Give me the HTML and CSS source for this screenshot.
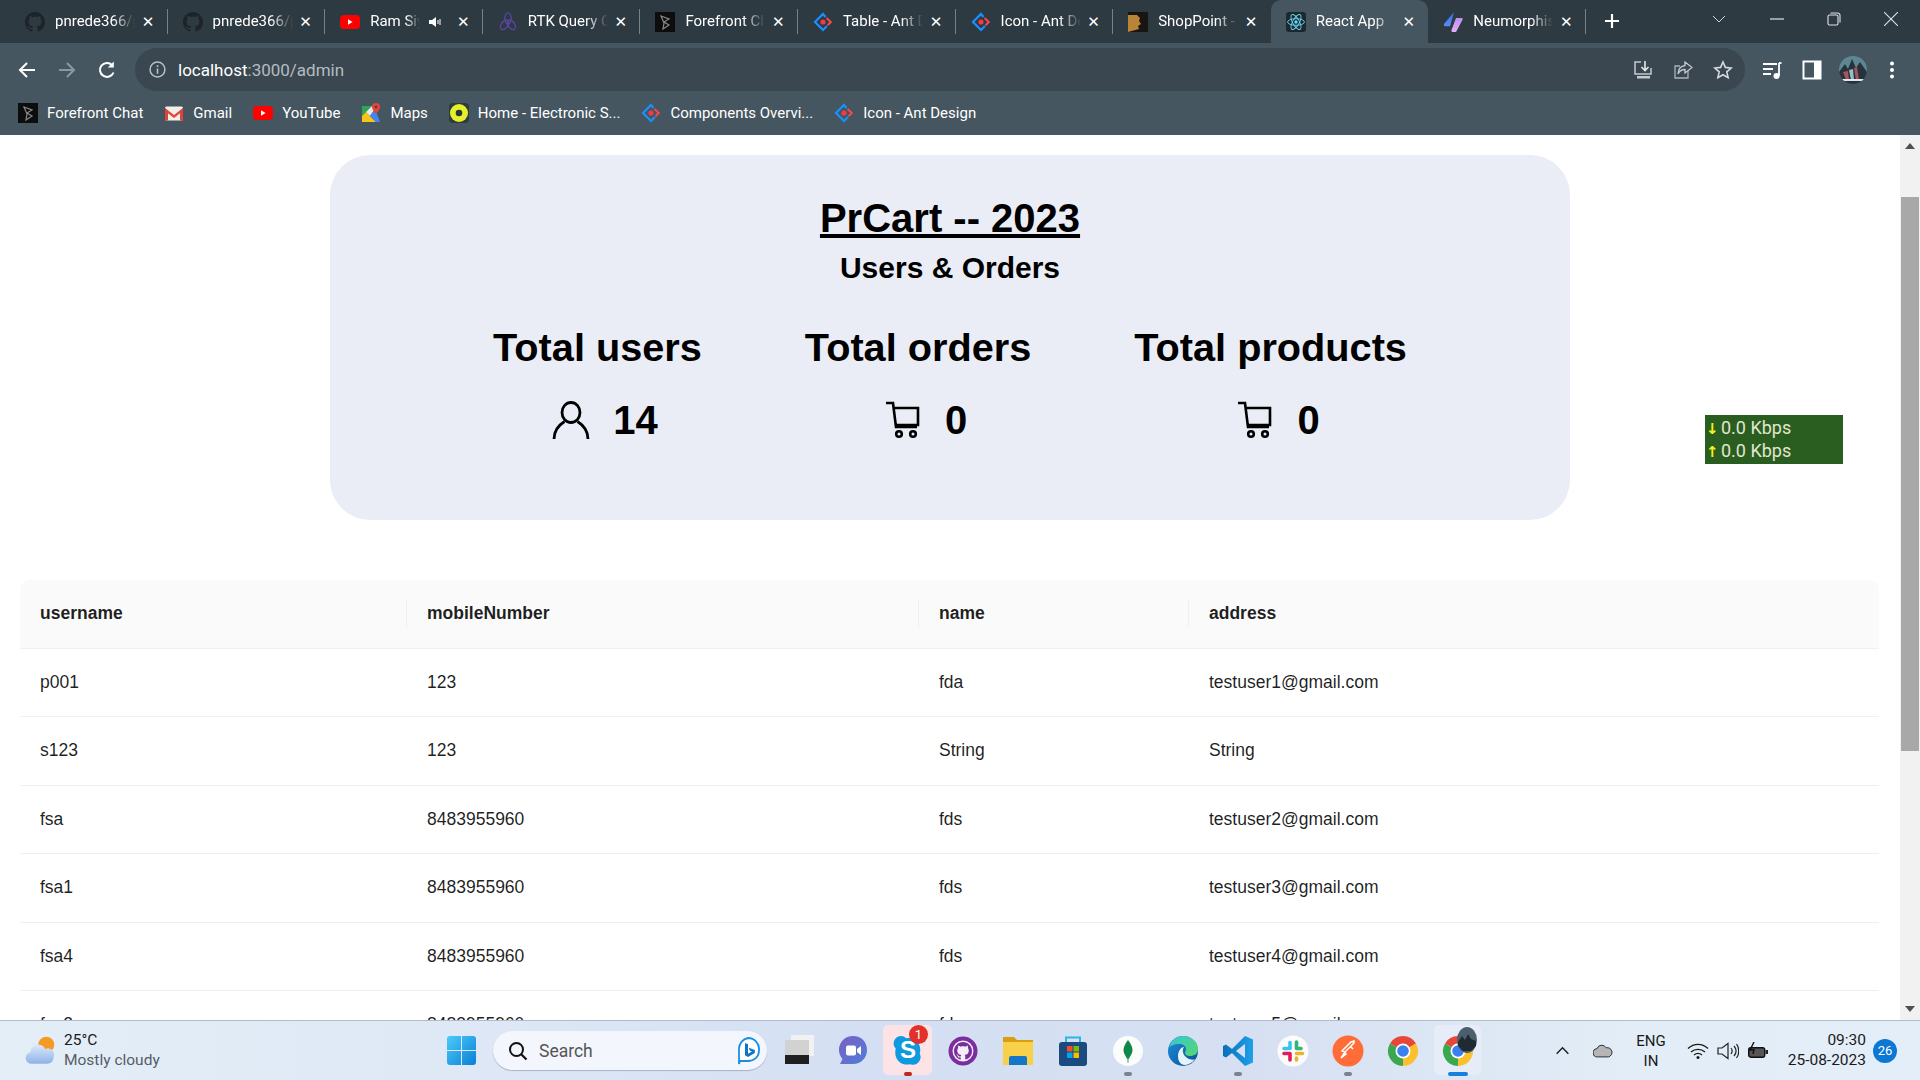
FILE: index.html
```html
<!DOCTYPE html>
<html lang="en">
<head>
<meta charset="utf-8">
<title>React App</title>
<link rel="stylesheet" href="styles.css">
</head>
<body>
<svg class="defs" aria-hidden="true">
  <defs>
    <linearGradient id="gEdge" x1="0" y1="0" x2="1" y2="1"><stop offset="0" stop-color="#36c8d8"/><stop offset="1" stop-color="#58d66a"/></linearGradient>
    <linearGradient id="gEdge2" x1="0" y1="0" x2="1" y2="1"><stop offset="0" stop-color="#1b8fd8"/><stop offset="1" stop-color="#0b4f9a"/></linearGradient>
    <linearGradient id="gCode" x1="0" y1="0" x2="1" y2="0"><stop offset="0" stop-color="#0a6fb8"/><stop offset="1" stop-color="#1fa0ea"/></linearGradient>
    <linearGradient id="gMeet" x1="0" y1="0" x2="1" y2="1"><stop offset="0" stop-color="#7b5fc4"/><stop offset="1" stop-color="#4f7ed8"/></linearGradient>
    <linearGradient id="gWin" x1="0" y1="0" x2="1" y2="1"><stop offset="0" stop-color="#4bcbf9"/><stop offset="1" stop-color="#0a7fd6"/></linearGradient>
    <linearGradient id="gNeu" x1="0" y1="0" x2="0" y2="1"><stop offset="0" stop-color="#3c6cf0"/><stop offset="1" stop-color="#5a8cf8"/></linearGradient>
    <linearGradient id="gNeu2" x1="0" y1="0" x2="0" y2="1"><stop offset="0" stop-color="#c08cf6"/><stop offset="1" stop-color="#e4b0f8"/></linearGradient>
    <linearGradient id="gCloud" x1="0" y1="0" x2="0" y2="1"><stop offset="0" stop-color="#dbe8fb"/><stop offset="1" stop-color="#8fb2e6"/></linearGradient>
    <symbol id="i-gh" viewBox="0 0 16 16"><path fill="currentColor" d="M8 0C3.58 0 0 3.58 0 8c0 3.54 2.29 6.53 5.47 7.59.4.07.55-.17.55-.38 0-.19-.01-.82-.01-1.49-2.01.37-2.53-.49-2.69-.94-.09-.23-.48-.94-.82-1.13-.28-.15-.68-.52-.01-.53.63-.01 1.08.58 1.23.82.72 1.21 1.87.87 2.33.66.07-.52.28-.87.51-1.07-1.78-.2-3.64-.89-3.64-3.95 0-.87.31-1.59.82-2.15-.08-.2-.36-1.02.08-2.12 0 0 .67-.21 2.2.82.64-.18 1.32-.27 2-.27.68 0 1.36.09 2 .27 1.53-1.04 2.2-.82 2.2-.82.44 1.1.16 1.92.08 2.12.51.56.82 1.27.82 2.15 0 3.07-1.87 3.75-3.65 3.95.29.25.54.73.54 1.48 0 1.07-.01 1.93-.01 2.2 0 .21.15.46.55.38A8.013 8.013 0 0016 8c0-4.42-3.58-8-8-8z"/></symbol>
    <symbol id="i-yt" viewBox="0 0 20 20"><rect y="3" width="20" height="14" rx="4" fill="#f00"/><path d="M8 7.200v5.600l4.600-2.800z" fill="#fff"/></symbol>
    <symbol id="i-rtk" viewBox="0 0 20 20"><g fill="none" stroke="#5b45a8" stroke-width="1.300"><ellipse cx="10" cy="6.500" rx="3.200" ry="5.600"/><ellipse cx="6.600" cy="12.800" rx="5.400" ry="3.200" transform="rotate(-55 6.600 12.800)"/><ellipse cx="13.400" cy="12.800" rx="5.400" ry="3.200" transform="rotate(55 13.400 12.800)"/></g></symbol>
    <symbol id="i-ff" viewBox="0 0 20 20"><rect width="20" height="20" fill="#0d0d0d"/><path d="M6 4l8 3-5 3 5 3-6 4 1-6z" fill="none" stroke="#8a8a8a" stroke-width="1.200"/></symbol>
    <symbol id="i-ant" viewBox="0 0 20 20"><path d="M12.500 5L10 2 2 10l8 8 4-4" fill="none" stroke="#1890ff" stroke-width="2.200"/><path d="M13.500 6l4.300 4-3.300 3.300" fill="none" stroke="#f5484f" stroke-width="2"/><circle cx="10" cy="10" r="2.600" fill="#f5384a"/></symbol>
    <symbol id="i-shop" viewBox="0 0 20 20"><rect width="20" height="20" fill="#191512"/><path d="M0 3h9l3 3-1 3 2 3-3 2 1 3-11 3z" fill="#b98436"/></symbol>
    <symbol id="i-react" viewBox="0 0 20 20"><rect width="20" height="20" rx="3" fill="#20272c"/><g fill="none" stroke="#61dafb" stroke-width=".9"><ellipse cx="10" cy="10" rx="8.400" ry="3.300"/><ellipse cx="10" cy="10" rx="8.400" ry="3.300" transform="rotate(60 10 10)"/><ellipse cx="10" cy="10" rx="8.400" ry="3.300" transform="rotate(120 10 10)"/></g><circle cx="10" cy="10" r="1.700" fill="#61dafb"/></symbol>
    <symbol id="i-neu" viewBox="0 0 20 20"><path d="M11 0L1 12c-.6 1 .2 2.200 1.200 2.200H7z" fill="url(#gNeu)"/><path d="M13 6h5.500c1 0 1.500 1 1 1.800L13 20c-3 1.500-5 0-4.500-2z" fill="url(#gNeu2)"/></symbol>
    <symbol id="i-gmail" viewBox="0 0 20 20"><rect x="1" y="3.500" width="18" height="14" rx="1.500" fill="#f3efe9"/><path d="M1 5l9 7 9-7v3l-9 7-9-7z" fill="#e04a3c"/><path d="M1 5v12.500h3V8zM19 5v12.500h-3V8z" fill="#d8453a"/></symbol>
    <symbol id="i-maps" viewBox="0 0 20 20"><path d="M1 3h10l-10 10z" fill="#2fa650"/><path d="M1 13l4-4 10 10H1z" fill="#f7c518"/><path d="M5 9l6-6 3 3-5 7z" fill="#e9e9e9"/><path d="M9 13l5-7 5 13h-4z" fill="#4285f4"/><path d="M15 0a4 4 0 014 4c0 3-4 7-4 7s-4-4-4-7a4 4 0 014-4z" fill="#e2473a"/><circle cx="15" cy="4" r="1.400" fill="#8c2a22"/></symbol>
    <symbol id="i-home" viewBox="0 0 20 20"><rect width="20" height="20" rx="4" fill="#2d3a42"/><circle cx="10" cy="10" r="9" fill="#e4f02a"/><circle cx="10" cy="10" r="3.300" fill="#29343a"/></symbol>
    <symbol id="i-chrome" viewBox="0 0 32 32"><path d="M16 16L3 8.500A15 15 0 0129 8.500z" fill="#e8463a"/><path d="M16 16L29 8.500A15 15 0 0116 31z" fill="#fbc02d"/><path d="M16 16L16 31A15 15 0 013 8.500z" fill="#3ba84f"/><circle cx="16" cy="16" r="7.500" fill="#fff"/><circle cx="16" cy="16" r="5.800" fill="#3a80f0"/></symbol>
    <symbol id="i-cart" viewBox="0 0 40 40"><g fill="none" stroke="#000" stroke-width="2.600"><path d="M3 3h7l3 24h21"/><path d="M10 8h25v17H13"/><circle cx="16" cy="34" r="2.800"/><circle cx="30" cy="34" r="2.800"/></g></symbol>
  </defs>
</svg>

<header class="tabstrip">
  <div class="tab"><svg class="fav gh"><use href="#i-gh"/></svg><span class="tab-title">pnrede366/prcart</span><span class="tab-x">✕</span></div>
  <div class="tab"><svg class="fav gh"><use href="#i-gh"/></svg><span class="tab-title">pnrede366/prcart</span><span class="tab-x">✕</span></div>
  <div class="tab"><svg class="fav"><use href="#i-yt"/></svg><span class="tab-title short">Ram Siya Ram</span><svg class="audio" viewBox="0 0 14 14"><path d="M1 5h3l4-3v10l-4-3H1z" fill="#fff"/><path d="M10 5v4M12 4v6" stroke="#fff" stroke-width="1"/></svg><span class="tab-x">✕</span></div>
  <div class="tab"><svg class="fav"><use href="#i-rtk"/></svg><span class="tab-title">RTK Query Overview</span><span class="tab-x">✕</span></div>
  <div class="tab"><svg class="fav"><use href="#i-ff"/></svg><span class="tab-title">Forefront Chat</span><span class="tab-x">✕</span></div>
  <div class="tab"><svg class="fav"><use href="#i-ant"/></svg><span class="tab-title">Table - Ant Design</span><span class="tab-x">✕</span></div>
  <div class="tab"><svg class="fav"><use href="#i-ant"/></svg><span class="tab-title">Icon - Ant Design</span><span class="tab-x">✕</span></div>
  <div class="tab before-active"><svg class="fav"><use href="#i-shop"/></svg><span class="tab-title">ShopPoint - Shop</span><span class="tab-x">✕</span></div>
  <div class="tab active"><svg class="fav"><use href="#i-react"/></svg><span class="tab-title">React App</span><span class="tab-x">✕</span></div>
  <div class="tab"><svg class="fav"><use href="#i-neu"/></svg><span class="tab-title">Neumorphism</span><span class="tab-x">✕</span></div>
  <svg class="newtab" viewBox="0 0 16 16"><path d="M8 1v14M1 8h14" stroke="#fff" stroke-width="2.200"/></svg>
  <div class="winctl">
    <svg class="wc chev" viewBox="0 0 14 14"><path d="M1 4l6 6 6-6" fill="none" stroke="#cfd6da" stroke-width="1"/></svg>
    <svg class="wc" viewBox="0 0 14 14"><path d="M0 7h14" stroke="#dfe4e7" stroke-width="1.200"/></svg>
    <svg class="wc" viewBox="0 0 14 14"><rect x="1" y="3" width="10" height="10" rx="1.500" fill="none" stroke="#dfe4e7" stroke-width="1.100"/><path d="M3.500 1h7a2.500 2.500 0 012.500 2.500v7" fill="none" stroke="#dfe4e7" stroke-width="1.100"/></svg>
    <svg class="wc" viewBox="0 0 14 14"><path d="M0 0l14 14M14 0L0 14" stroke="#dfe4e7" stroke-width="1.100"/></svg>
  </div>
</header>

<nav class="toolbar">
  <svg class="nav-ic" viewBox="0 0 20 20"><path d="M18 10H3M10 3l-7 7 7 7" fill="none" stroke="#fff" stroke-width="2"/></svg>
  <svg class="nav-ic" viewBox="0 0 20 20"><path d="M2 10h15M10 3l7 7-7 7" fill="none" stroke="#8c989f" stroke-width="2"/></svg>
  <svg class="nav-ic" viewBox="0 0 20 20"><path d="M16.500 12.500A7 7 0 1 1 15 5" fill="none" stroke="#fff" stroke-width="2"/><path d="M16.800 1.500v6h-6z" fill="#fff"/></svg>
  <div class="omnibox">
    <svg class="info" viewBox="0 0 16 16"><circle cx="8" cy="8" r="7" fill="none" stroke="#b9c1c6" stroke-width="1.400"/><path d="M8 7v5M8 4v1.700" stroke="#b9c1c6" stroke-width="1.500"/></svg>
    <span class="url">localhost<span class="url-dim">:3000/admin</span></span>
    <svg class="omni-ic first" viewBox="0 0 20 20"><path d="M8 2H2v12h16V8" fill="none" stroke="#c3cacf" stroke-width="1.500"/><path d="M12 1v9M8.500 7l3.500 3.500L15.500 7" fill="none" stroke="#e4e8ea" stroke-width="1.600"/><path d="M4 16h13v2.500H4z" fill="#c3cacf"/></svg>
    <svg class="omni-ic" viewBox="0 0 20 20"><path d="M15 11v7H2V6h5" fill="none" stroke="#aab3b8" stroke-width="1.300"/><path d="M12 2l7 5.500-7 5.500V9.500C8.500 9.500 6.500 11 5 14c.3-5 3-8 7-8.500z" fill="none" stroke="#c3cacf" stroke-width="1.300"/></svg>
    <svg class="omni-ic" viewBox="0 0 20 20"><path d="M10 2l2.400 5.400 5.800.6-4.400 3.900 1.300 5.800L10 14.700l-5.100 3 1.300-5.800L1.800 8l5.800-.6z" fill="none" stroke="#d5dadd" stroke-width="1.600"/></svg>
  </div>
  <svg class="tool-ic media" viewBox="0 0 20 20"><path d="M1 4h14M1 9h10M1 14h8" stroke="#fff" stroke-width="1.800"/><path d="M17 3v13" stroke="#fff" stroke-width="1.800"/><path d="M17 3h2.500" stroke="#fff" stroke-width="1.800"/><circle cx="14.500" cy="16" r="3" fill="#fff"/></svg>
  <svg class="tool-ic" viewBox="0 0 20 20"><rect x="1.500" y="1.500" width="17" height="17" fill="none" stroke="#fff" stroke-width="2"/><rect x="12" y="1.500" width="7" height="17" fill="#fff"/></svg>
  <svg class="tool-ic avatar" viewBox="0 0 28 28"><clipPath id="av"><circle cx="14" cy="14" r="14"/></clipPath><g clip-path="url(#av)"><rect width="28" height="28" fill="#5d8792"/><path d="M0 16l6-8 3 5 4-10 4 9 4-6 7 10v12H0z" fill="#27323c"/><path d="M4 16l3 8h3l-1-9zM15 12l2 12h3l-2-13z" fill="#a7545a"/><path d="M10 14l2 10h3l-1-11z" fill="#8fc0cc"/><rect y="23" width="28" height="2" fill="#dfe6e8"/></g></svg>
  <svg class="tool-ic dots" viewBox="0 0 20 20"><circle cx="10" cy="3.500" r="2" fill="#fff"/><circle cx="10" cy="10" r="2" fill="#fff"/><circle cx="10" cy="16.500" r="2" fill="#fff"/></svg>
</nav>

<div class="bookmarks">
  <span class="bm"><svg class="fav"><use href="#i-ff"/></svg>Forefront Chat</span>
  <span class="bm"><svg class="fav"><use href="#i-gmail"/></svg>Gmail</span>
  <span class="bm"><svg class="fav"><use href="#i-yt"/></svg>YouTube</span>
  <span class="bm"><svg class="fav"><use href="#i-maps"/></svg>Maps</span>
  <span class="bm"><svg class="fav"><use href="#i-home"/></svg>Home - Electronic S...</span>
  <span class="bm"><svg class="fav"><use href="#i-ant"/></svg>Components Overvi...</span>
  <span class="bm"><svg class="fav"><use href="#i-ant"/></svg>Icon - Ant Design</span>
</div>

<div class="viewport">
  <main class="page">
    <section class="card">
      <h1 class="title">PrCart -- 2023</h1>
      <h2 class="subtitle">Users &amp; Orders</h2>
      <div class="stats">
        <div class="stat">
          <h3 class="stat-label">Total users</h3>
          <div class="stat-value">
            <svg class="stat-ic" viewBox="0 0 40 40"><g fill="none" stroke="#000" stroke-width="2.800"><ellipse cx="20" cy="12.500" rx="9" ry="10"/><path d="M3 39c0-9 5-14 10.500-17.500M37 39c0-9-5-14-10.500-17.500"/></g></svg>
            <span>14</span>
          </div>
        </div>
        <div class="stat">
          <h3 class="stat-label">Total orders</h3>
          <div class="stat-value"><svg class="stat-ic"><use href="#i-cart"/></svg><span>0</span></div>
        </div>
        <div class="stat">
          <h3 class="stat-label">Total products</h3>
          <div class="stat-value"><svg class="stat-ic"><use href="#i-cart"/></svg><span>0</span></div>
        </div>
      </div>
    </section>

    <table class="data">
      <colgroup><col class="c1"><col class="c2"><col class="c3"><col class="c4"></colgroup>
      <thead>
        <tr><th>username</th><th>mobileNumber</th><th>name</th><th>address</th></tr>
      </thead>
      <tbody>
        <tr><td>p001</td><td>123</td><td>fda</td><td>testuser1@gmail.com</td></tr>
        <tr><td>s123</td><td>123</td><td>String</td><td>String</td></tr>
        <tr><td>fsa</td><td>8483955960</td><td>fds</td><td>testuser2@gmail.com</td></tr>
        <tr><td>fsa1</td><td>8483955960</td><td>fds</td><td>testuser3@gmail.com</td></tr>
        <tr><td>fsa4</td><td>8483955960</td><td>fds</td><td>testuser4@gmail.com</td></tr>
        <tr><td>fsa2</td><td>8483955960</td><td>fds</td><td>testuser5@gmail.com</td></tr>
      </tbody>
    </table>
  </main>

  <aside class="scrollbar">
    <span class="sb-arrow up"></span>
    <span class="sb-thumb"></span>
    <span class="sb-arrow down"></span>
  </aside>

  <div class="netspeed">
    <div><b>↓</b>0.0 Kbps</div>
    <div><b>↑</b>0.0 Kbps</div>
  </div>
</div>

<footer class="taskbar">
  <div class="weather">
    <svg class="weather-ic" viewBox="0 0 32 30"><circle cx="21" cy="9" r="7.500" fill="#f59a23"/><path d="M7 27a5.500 5.500 0 01-1-10.900A7.500 7.500 0 0120 13a5.800 5.800 0 018 7c0 4-2 7-6 7z" fill="url(#gCloud)"/></svg>
    <div class="weather-text"><div class="w-temp">25°C</div><div class="w-desc">Mostly cloudy</div></div>
  </div>
  <svg class="winlogo" viewBox="0 0 29 29"><path d="M0 3a3 3 0 013-3h11v14H0zM15 0h11a3 3 0 013 3v11H15zM0 15h14v14H3a3 3 0 01-3-3zM15 15h14v11a3 3 0 01-3 3H15z" fill="url(#gWin)"/></svg>
  <div class="search">
    <svg class="search-ic" viewBox="0 0 20 20"><circle cx="8.500" cy="8.500" r="6.500" fill="none" stroke="#111" stroke-width="2"/><path d="M13 13l5.500 5.500" stroke="#111" stroke-width="2.200"/></svg>
    <span class="search-text">Search</span>
    <svg class="bing" viewBox="0 0 24 28"><path d="M12 1a11 11 0 0111 12c0 7-5 11-11 11H4l-1 3V12A11 11 0 0112 1z" fill="#fff" stroke="#1a8fe0" stroke-width="1.800"/><path d="M9 6l3 1.200v9.500l4-2.300-2.200-1-1-2.700 6 2.300v3L12 20l-3-1.700z" fill="#1273c9"/></svg>
  </div>
  <div class="apps">
    <div class="app"><svg class="app-ic" viewBox="0 0 32 32"><rect x="9" y="0" width="23" height="21" rx="1" fill="#f2f2f2"/><rect x="3" y="5" width="24" height="24" fill="#d2d2d2"/><rect x="3" y="20" width="24" height="9" fill="#1f1f1f"/></svg></div>
    <div class="app"><svg class="app-ic" viewBox="0 0 32 32"><path d="M16 1c8.500 0 14 6 14 14s-6 14-14 14H3l2.500-5C3 21 2 18 2 15 2 7 8 1 16 1z" fill="url(#gMeet)"/><rect x="9" y="10.500" width="10" height="10" rx="2" fill="#fff"/><path d="M20 14l4-3v9l-4-3z" fill="#fff"/></svg></div>
    <div class="app skype">
      <svg class="app-ic" viewBox="0 0 32 34"><path d="M8 1a7 7 0 016 2.500c8-1.500 15 4 15 12 0 2 0 3-.5 4.500a8 8 0 01-10 11c-9 2-16-4-16-12 0-2 0-3 .5-4.500A8 8 0 018 1z" fill="#0f9ae0"/></svg>
      <span class="skype-s">S</span>
      <span class="badge-red">1</span>
      <i class="dot red"></i>
    </div>
    <div class="app"><svg class="app-ic" viewBox="0 0 32 32"><circle cx="16" cy="16" r="14.500" fill="#7a2d9c"/><circle cx="16" cy="16" r="10.500" fill="#f3eef7"/><svg x="7" y="7" width="18" height="18" color="#7a2d9c"><use href="#i-gh"/></svg></svg></div>
    <div class="app"><svg class="app-ic" viewBox="0 0 32 32"><path d="M1 2h11l3 3h16v4H1z" fill="#d99e0b"/><path d="M1 7h30v23H1z" fill="#f8d04a"/><path d="M9 21h14a2 2 0 012 2v7H7v-7a2 2 0 012-2z" fill="#1576c7"/></svg></div>
    <div class="app"><svg class="app-ic" viewBox="0 0 32 32"><path d="M9 7V2.500h14V7" fill="none" stroke="#2bb6e8" stroke-width="2"/><rect x="2" y="7" width="28" height="24" rx="3" fill="#1b4a80"/><rect x="10" y="11" width="5.500" height="5.500" fill="#f25022"/><rect x="16.500" y="11" width="5.500" height="5.500" fill="#7fba00"/><rect x="10" y="17.500" width="5.500" height="5.500" fill="#00a4ef"/><rect x="16.500" y="17.500" width="5.500" height="5.500" fill="#ffb900"/></svg></div>
    <div class="app"><svg class="app-ic" viewBox="0 0 32 32"><circle cx="16" cy="16" r="15" fill="#fbfdfb"/><path d="M16 5c3 4 4.500 7 4.500 10S18 22 16.500 24l-.2 4h-.6l-.2-4C14 22 11.500 18 11.500 15S13 9 16 5z" fill="#10874a"/></svg><i class="dot grey"></i></div>
    <div class="app"><svg class="app-ic" viewBox="0 0 32 32"><circle cx="16" cy="16" r="15" fill="url(#gEdge2)"/><path d="M2 13C4 5 10 1 16 1c9 0 15 6 15 13 0 5-4 7-8 7-3 0-5-1-5-3 0-1 1-2 1-4 0-3-3-5-7-5-5 0-9 2-10 4z" fill="url(#gEdge)"/><path d="M11 21c0-5 3-9 6-9-3 4 0 10 5 12 3 1 5 1 6 0-3 4-7 6-11 6-4-1-6-4-6-9z" fill="#e6f3fb"/></svg><i class="dot none"></i></div>
    <div class="app"><svg class="app-ic" viewBox="0 0 32 32"><path d="M23 1L10 14 4 9.500 1 11v10l3 1.500L10 18l13 13 8-3.500v-23zM23 9v14l-9-7z" fill="url(#gCode)" fill-rule="evenodd"/></svg><i class="dot grey"></i></div>
    <div class="app"><svg class="app-ic" viewBox="0 0 32 32"><circle cx="16" cy="16" r="15.500" fill="#fbfbfb"/><g stroke-width="3.600" stroke-linecap="round"><path d="M13 7.500v6M7 13.500h4" stroke="#36c5f0"/><path d="M19.500 7v6.500M19.500 13.500h4.500" stroke="#2eb67d"/><path d="M19.500 18.500h6M19.500 25v-2" stroke="#ecb22e"/><path d="M13 18.500v6.500M7 18.500h6" stroke="#e01e5a"/></g></svg></div>
    <div class="app"><svg class="app-ic" viewBox="0 0 32 32"><circle cx="16" cy="16" r="15.500" fill="#ff6c37"/><path d="M22 8l-9 9-3-1 9-9 3-1zM13 17l-4 6M13 17l1 2-5 4M18 11l3 3" fill="none" stroke="#fff" stroke-width="1.500"/></svg><i class="dot grey"></i></div>
    <div class="app"><svg class="app-ic"><use href="#i-chrome"/></svg></div>
    <div class="app current">
      <svg class="app-ic"><use href="#i-chrome"/></svg>
      <svg class="profile-mini" viewBox="0 0 20 26"><ellipse cx="10" cy="13" rx="10" ry="13" fill="#4c5f6c"/><path d="M1 15l4-6 3 4 3-6 3 5 5 2v5l-5 5H6l-5-5z" fill="#1f2a32"/></svg>
      <i class="dot blue"></i>
    </div>
  </div>
  <div class="tray">
    <svg class="tray-caret" viewBox="0 0 16 10"><path d="M1.500 8.500L8 2l6.500 6.500" fill="none" stroke="#1a1a1a" stroke-width="1.500"/></svg>
    <svg class="tray-cloud" viewBox="0 0 22 14"><path d="M5 13.500a4.500 4.500 0 01-.6-9A5.500 5.500 0 0114.500 3.500 4.800 4.800 0 0117 13.500z" fill="#b5b5b5" stroke="#222" stroke-width="1"/></svg>
    <div class="tray-lang"><div>ENG</div><div>IN</div></div>
    <svg class="tray-ic" viewBox="0 0 22 18"><path d="M1 6.500c6-5.500 14-5.500 20 0M4 10c4-3.500 10-3.500 14 0M7 13c2.500-2 5.500-2 8 0" fill="none" stroke="#1a1a1a" stroke-width="1.400"/><circle cx="11" cy="15.500" r="1.500" fill="#1a1a1a"/></svg>
    <svg class="tray-ic" viewBox="0 0 22 18"><path d="M1 6h4l6-4.500v15L5 12H1z" fill="none" stroke="#222" stroke-width="1.200"/><path d="M14 6c1.500 2 1.500 4 0 6M17 4c2.500 3 2.500 7 0 10M19.500 2c3 4 3 10 0 14" fill="none" stroke="#222" stroke-width="1.200"/></svg>
    <svg class="tray-ic" viewBox="0 0 22 18"><rect x="1.700" y="5.700" width="16" height="9.500" rx="2" fill="#555" stroke="#111" stroke-width="1.400"/><rect x="18.500" y="8" width="2.500" height="4" fill="#222"/><path d="M7 0L3 8h4l-1 4" fill="none" stroke="#111" stroke-width="1.400"/></svg>
    <div class="clock"><div>09:30</div><div>25-08-2023</div></div>
    <span class="notif">26</span>
  </div>
</footer>
</body>
</html>
```

FILE: styles.css
```css
* { box-sizing: border-box; }
html, body { margin: 0; height: 100%; }
body {
  width: 1920px;
  height: 1080px;
  overflow: hidden;
  display: flex;
  flex-direction: column;
  font-family: "Liberation Sans", Arial, sans-serif;
  background: #fff;
}
.defs { display: block; width: 0; height: 0; flex: none; }

/* Browser chrome */
.tabstrip {
  flex: none;
  height: 43px;
  padding-left: 10px;
  display: flex;
  align-items: stretch;
  background: #2e3a41;
  color: #fff;
  font: 15px Roboto, sans-serif;
}
.tab {
  position: relative;
  flex: none;
  width: 157.6px;
  height: 43px;
  padding-left: 15px;
  display: flex;
  align-items: center;
}
.tab::after {
  content: "";
  position: absolute;
  right: 0;
  top: 9px;
  height: 25px;
  width: 1px;
  background: #74828a;
}
.tab.active { background: #455660; border-radius: 10px 10px 0 0; }
.tab.active::after, .tab.before-active::after { display: none; }
.fav { width: 20px; height: 20px; flex: none; }
.fav.gh { color: #1c2429; }
.tab-title {
  flex: none;
  width: 80px;
  margin: -2px 0 0 10px;
  white-space: nowrap;
  overflow: hidden;
  -webkit-mask-image: linear-gradient(90deg, #000 72%, transparent 100%);
  mask-image: linear-gradient(90deg, #000 72%, transparent 100%);
}
.tab-title.short { width: 50px; }
.audio { width: 14px; height: 14px; margin-left: 8px; flex: none; }
.tab-x {
  position: absolute;
  left: 129px;
  width: 18px;
  text-align: center;
  font: 15px "DejaVu Sans", sans-serif;
  color: #fff;
}
.newtab { width: 16px; height: 16px; margin: 13px 0 0 18px; flex: none; }
.winctl { margin-left: auto; display: flex; align-items: flex-start; }
.wc { width: 14px; height: 14px; margin: 12px 22px 0 21px; flex: none; }
.wc.chev { margin-right: 23px; }

.toolbar {
  flex: none;
  height: 48px;
  padding: 5px 0 0 17px;
  display: flex;
  align-items: center;
  background: #455660;
}
.nav-ic { width: 20px; height: 20px; margin-right: 20px; flex: none; }
.omnibox {
  width: 1610px;
  height: 43px;
  margin-left: -2px;
  padding: 0 12px 0 14px;
  display: flex;
  align-items: center;
  border-radius: 22px;
  background: #3a4750;
}
.info { width: 17px; height: 17px; flex: none; }
.url { margin-left: 12px; font: 17px Roboto, sans-serif; color: #fff; }
.url-dim { color: #b4bcc1; }
.omni-ic { width: 20px; height: 20px; margin-left: 20px; flex: none; }
.omni-ic.first { margin-left: auto; }
.tool-ic { width: 20px; height: 20px; flex: none; margin-left: 20px; }
.tool-ic.media { margin-left: 17px; }
.tool-ic.avatar { width: 28px; height: 28px; margin-left: 17px; }
.tool-ic.dots { margin-left: 15px; }

.bookmarks {
  flex: none;
  height: 44px;
  padding-left: 18px;
  display: flex;
  align-items: center;
  gap: 21px;
  background: #455660;
  color: #fff;
  font: 15px Roboto, sans-serif;
}
.bm { display: flex; align-items: center; gap: 9px; white-space: nowrap; }

/* Page */
.viewport {
  position: relative;
  flex: 1;
  min-height: 0;
  display: flex;
  overflow: hidden;
}
.page { flex: 1; min-width: 0; overflow: hidden; }
.card {
  width: 1240px;
  height: 365px;
  margin: 20px auto 0;
  padding-top: 39px;
  border-radius: 40px;
  background: #eaedf5;
  color: #000;
  text-align: center;
}
.title {
  margin: 0;
  font-size: 40px;
  line-height: 48px;
  font-weight: 700;
  text-decoration: underline;
}
.subtitle {
  margin: 8px 0 0;
  font-size: 30px;
  line-height: 36px;
  font-weight: 700;
}
.stats {
  margin-top: 38px;
  display: flex;
  justify-content: center;
  gap: 103px;
}
.stat-label {
  margin: 0;
  font-size: 39.7px;
  line-height: 46px;
  font-weight: 700;
  white-space: nowrap;
}
.stat-value {
  margin-top: 27px;
  height: 46px;
  padding-left: 14px;
  display: flex;
  justify-content: center;
  align-items: center;
  gap: 22px;
  font-size: 40px;
  font-weight: 700;
}
.stat-ic { width: 40px; height: 40px; flex: none; }

.data {
  width: 1859px;
  margin: 60px 20px 0;
  table-layout: fixed;
  border-collapse: separate;
  border-spacing: 0;
  font-size: 17.5px;
  line-height: 27.5px;
  color: rgba(0, 0, 0, .88);
}
.c1 { width: 387px; }
.c2 { width: 512px; }
.c3 { width: 270px; }
.c4 { width: 690px; }
.data th, .data td {
  padding: 20px;
  text-align: left;
  border-bottom: 1px solid #f0f0f0;
}
.data th {
  position: relative;
  background: #fafafa;
  font-weight: 700;
}
.data th:first-child { border-top-left-radius: 10px; }
.data th:last-child { border-top-right-radius: 10px; }
.data th:not(:last-child)::after {
  content: "";
  position: absolute;
  right: 0;
  top: 20px;
  height: 28px;
  width: 1px;
  background: #f0f0f0;
}

.scrollbar {
  flex: none;
  width: 20px;
  padding-top: 62px;
  position: relative;
  background: #f1f1f1;
}
.sb-thumb {
  display: block;
  width: 18px;
  height: 554px;
  margin-left: 1px;
  background: #a8a8a8;
}
.sb-arrow {
  position: absolute;
  left: 5px;
  width: 0;
  height: 0;
  border-left: 5px solid transparent;
  border-right: 5px solid transparent;
}
.sb-arrow.up { top: 8px; border-bottom: 6px solid #505050; }
.sb-arrow.down { bottom: 8px; border-top: 6px solid #505050; }

.netspeed {
  position: absolute;
  left: 1705px;
  top: 280px;
  width: 138px;
  height: 49px;
  padding: 2px 0 0 1px;
  background: #2a5e20;
  color: #e2e6cf;
  font: 18px/22.5px Roboto, sans-serif;
}
.netspeed b { display: inline-block; width: 15px; color: #f4f414; font: 700 15px "DejaVu Sans", sans-serif; }

/* Taskbar */
.taskbar {
  flex: none;
  height: 60px;
  display: flex;
  align-items: center;
  border-top: 1px solid #b3bccb;
  background: linear-gradient(90deg, #e4eef7 0%, #dfe9f6 22%, #d4dff3 45%, #d6e0f2 65%, #e2edf7 85%, #e4eef8 100%);
  font: 15px Roboto, sans-serif;
  color: #1a1a1a;
}
.weather {
  flex: none;
  width: 447px;
  padding-left: 24px;
  display: flex;
  align-items: center;
  gap: 6px;
}
.weather-ic { width: 34px; height: 32px; flex: none; }
.weather-text { margin-top: -2px; line-height: 20px; font-size: 15.5px; }
.w-desc { color: #555e66; }
.winlogo { width: 29px; height: 29px; flex: none; }
.search {
  flex: none;
  width: 274px;
  height: 39px;
  margin-left: 17px;
  padding: 0 7px 0 15px;
  display: flex;
  align-items: center;
  border-radius: 20px;
  background: #f3f6fd;
  box-shadow: 0 1px 1px #aab3c6;
}
.search-ic { width: 20px; height: 20px; flex: none; }
.search-text { margin-left: 11px; font-size: 17.5px; color: #555; }
.bing { width: 24px; height: 28px; margin-left: auto; flex: none; }
.apps { flex: none; margin-left: 3px; display: flex; height: 100%; }
.app {
  position: relative;
  flex: none;
  width: 55px;
  display: flex;
  align-items: center;
  justify-content: center;
}
.app-ic { width: 32px; height: 32px; flex: none; }
.app.skype::before, .app.current::before {
  content: "";
  position: absolute;
  left: 3px;
  right: 3px;
  top: 4px;
  bottom: 5px;
  border-radius: 5px;
  background: #fce4e6;
}
.app.current::before { background: #e6edf9; left: 4px; right: 4px; }
.app > * { position: relative; }
.skype-s {
  position: absolute;
  left: 18px;
  top: 13px;
  width: 20px;
  text-align: center;
  font: 700 24px/32px "Liberation Sans", sans-serif;
  color: #fff;
}
.badge-red {
  position: absolute;
  left: 29px;
  top: 4px;
  width: 19px;
  height: 19px;
  border-radius: 50%;
  background: #e3302a;
  color: #fff;
  text-align: center;
  font-size: 13px;
  line-height: 19px;
}
.dot {
  position: absolute;
  left: 50%;
  bottom: 4px;
  width: 8px;
  height: 4px;
  margin-left: -4px;
  border-radius: 2px;
  background: #7d838c;
}
.dot.red { background: #c4281c; }
.dot.blue { width: 20px; margin-left: -10px; background: #1a7fdc; }
.dot.none { display: none; }
.profile-mini {
  position: absolute;
  left: 27px;
  top: 6px;
  width: 20px;
  height: 26px;
}
.tray { flex: none; margin-left: auto; padding-right: 23px; display: flex; align-items: center; }
.tray-caret { width: 15px; height: 9px; margin: 0 23px 0 10px; flex: none; }
.tray-cloud { width: 20px; height: 14px; margin-right: 15px; flex: none; }
.tray-lang { width: 46px; margin-right: 9px; text-align: center; line-height: 20px; font-size: 15px; }
.tray-ic { width: 22px; height: 18px; margin: 0 4px; flex: none; }
.clock { width: 93px; margin-top: -2px; text-align: right; line-height: 20px; font-size: 15.5px; }
.notif {
  width: 24px;
  height: 24px;
  margin-left: 7px;
  border-radius: 50%;
  background: #0b78d4;
  color: #fff;
  text-align: center;
  font-size: 13px;
  line-height: 24px;
}
```
